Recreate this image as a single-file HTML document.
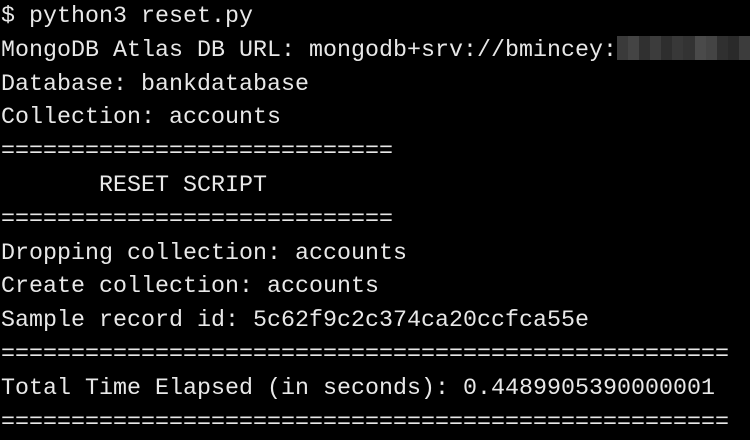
<!DOCTYPE html>
<html><head><style>
html,body{margin:0;padding:0;background:#000;width:750px;height:440px;overflow:hidden}
pre{margin:0;position:absolute;left:1px;top:0px;color:#e8e8e8;font-family:"Liberation Mono",monospace;font-size:23.3px;line-height:33.8px;letter-spacing:0.02px}
.blur{position:absolute;left:617px;top:36px;width:133px;height:24px;display:flex}
.blur div{flex:1}
</style></head><body>
<pre>$ python3 reset.py
MongoDB Atlas DB URL: mongodb+srv://bmincey:
Database: bankdatabase
Collection: accounts
============================
       RESET SCRIPT
============================
Dropping collection: accounts
Create collection: accounts
Sample record id: 5c62f9c2c374ca20ccfca55e
====================================================
Total Time Elapsed (in seconds): 0.4489905390000001
====================================================</pre>
<div class="blur">
<div style="background:#3a3a3a"></div><div style="background:#444"></div><div style="background:#303030"></div><div style="background:#3c3c3c"></div><div style="background:#2e2e2e"></div><div style="background:#383838"></div><div style="background:#333"></div><div style="background:#4a4a4a"></div><div style="background:#444"></div><div style="background:#303030"></div><div style="background:#2a2a2a"></div><div style="background:#3c3c3c"></div>
</div>
</body></html>
